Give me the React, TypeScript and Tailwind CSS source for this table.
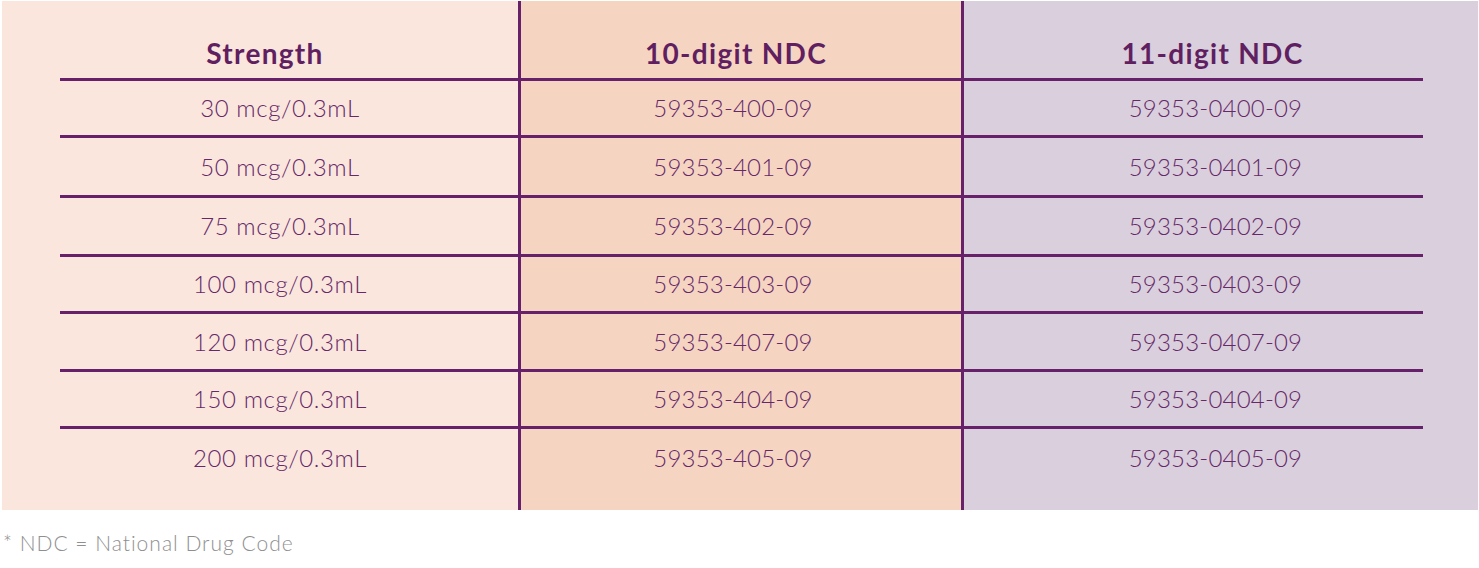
const rows = [
  { strength: "30 mcg/0.3mL", ten: "59353-400-09", eleven: "59353-0400-09", h: "h-[57px]" },
  { strength: "50 mcg/0.3mL", ten: "59353-401-09", eleven: "59353-0401-09", h: "h-[60px]" },
  { strength: "75 mcg/0.3mL", ten: "59353-402-09", eleven: "59353-0402-09", h: "h-[59px]" },
  { strength: "100 mcg/0.3mL", ten: "59353-403-09", eleven: "59353-0403-09", h: "h-[57px]" },
  { strength: "120 mcg/0.3mL", ten: "59353-407-09", eleven: "59353-0407-09", h: "h-[58px]" },
  { strength: "150 mcg/0.3mL", ten: "59353-404-09", eleven: "59353-0404-09", h: "h-[57px]" },
  { strength: "200 mcg/0.3mL", ten: "59353-405-09", eleven: "59353-0405-09", h: "h-[81px]" },
];

export default function App() {
  return (
    <main className="min-h-screen bg-white font-['Lato','Noto_Sans',sans-serif]">
      <div className="pl-[2px] pr-[2px] pt-[1px]">
        <div className="grid grid-cols-[516px_443px_517px]">
          {/* Header */}
          <div className="h-[80px] bg-[#fbe6de]">
            <div className="ml-[58px] h-full border-b-[3px] border-[#66216a] flex items-end justify-center pb-[11px] pr-[48px]">
              <span className="text-[28px] font-bold tracking-[1.3px] text-[#5f1f60] leading-none">Strength</span>
            </div>
          </div>
          <div className="h-[80px] bg-[#f6d4c2] border-l-[3px] border-[#66216a]">
            <div className="h-full border-b-[3px] border-[#66216a] flex items-end justify-center pb-[11px] pr-[10px]">
              <span className="text-[28px] font-bold tracking-[1.3px] text-[#5f1f60] leading-none">10-digit NDC</span>
            </div>
          </div>
          <div className="h-[80px] bg-[#dacfdd] border-l-[3px] border-[#66216a]">
            <div className="mr-[55px] h-full border-b-[3px] border-[#66216a] flex items-end justify-center pb-[11px] pl-[38px]">
              <span className="text-[28px] font-bold tracking-[1.3px] text-[#5f1f60] leading-none">11-digit NDC</span>
            </div>
          </div>

          {/* Body rows */}
          {rows.map((r, i) => {
            const last = i === rows.length - 1;
            const line = last ? "pb-[24px]" : "border-b-[3px] border-[#66216a]";
            return [
              <div key={r.strength + "a"} className={`${r.h} bg-[#fbe6de]`}>
                <div className={`ml-[58px] h-full ${line} flex items-center justify-center pr-[18px]`}>
                  <span className="text-[24px] font-light tracking-[0.6px] text-[#652868]">{r.strength}</span>
                </div>
              </div>,
              <div key={r.strength + "b"} className={`${r.h} bg-[#f6d4c2] border-l-[3px] border-[#66216a]`}>
                <div className={`h-full ${line} flex items-center justify-center pr-[16px]`}>
                  <span className="text-[24px] font-light tracking-[0.2px] text-[#652868]">{r.ten}</span>
                </div>
              </div>,
              <div key={r.strength + "c"} className={`${r.h} bg-[#dacfdd] border-l-[3px] border-[#66216a]`}>
                <div className={`mr-[55px] h-full ${line} flex items-center justify-center pl-[44px]`}>
                  <span className="text-[24px] font-light tracking-[0.2px] text-[#652868]">{r.eleven}</span>
                </div>
              </div>,
            ];
          })}
        </div>
      </div>
      <p className="mt-[22px] pl-[3px] text-[21px] font-light tracking-[1px] text-[#8f8f8f] leading-none">* NDC = National Drug Code</p>
    </main>
  );
}
